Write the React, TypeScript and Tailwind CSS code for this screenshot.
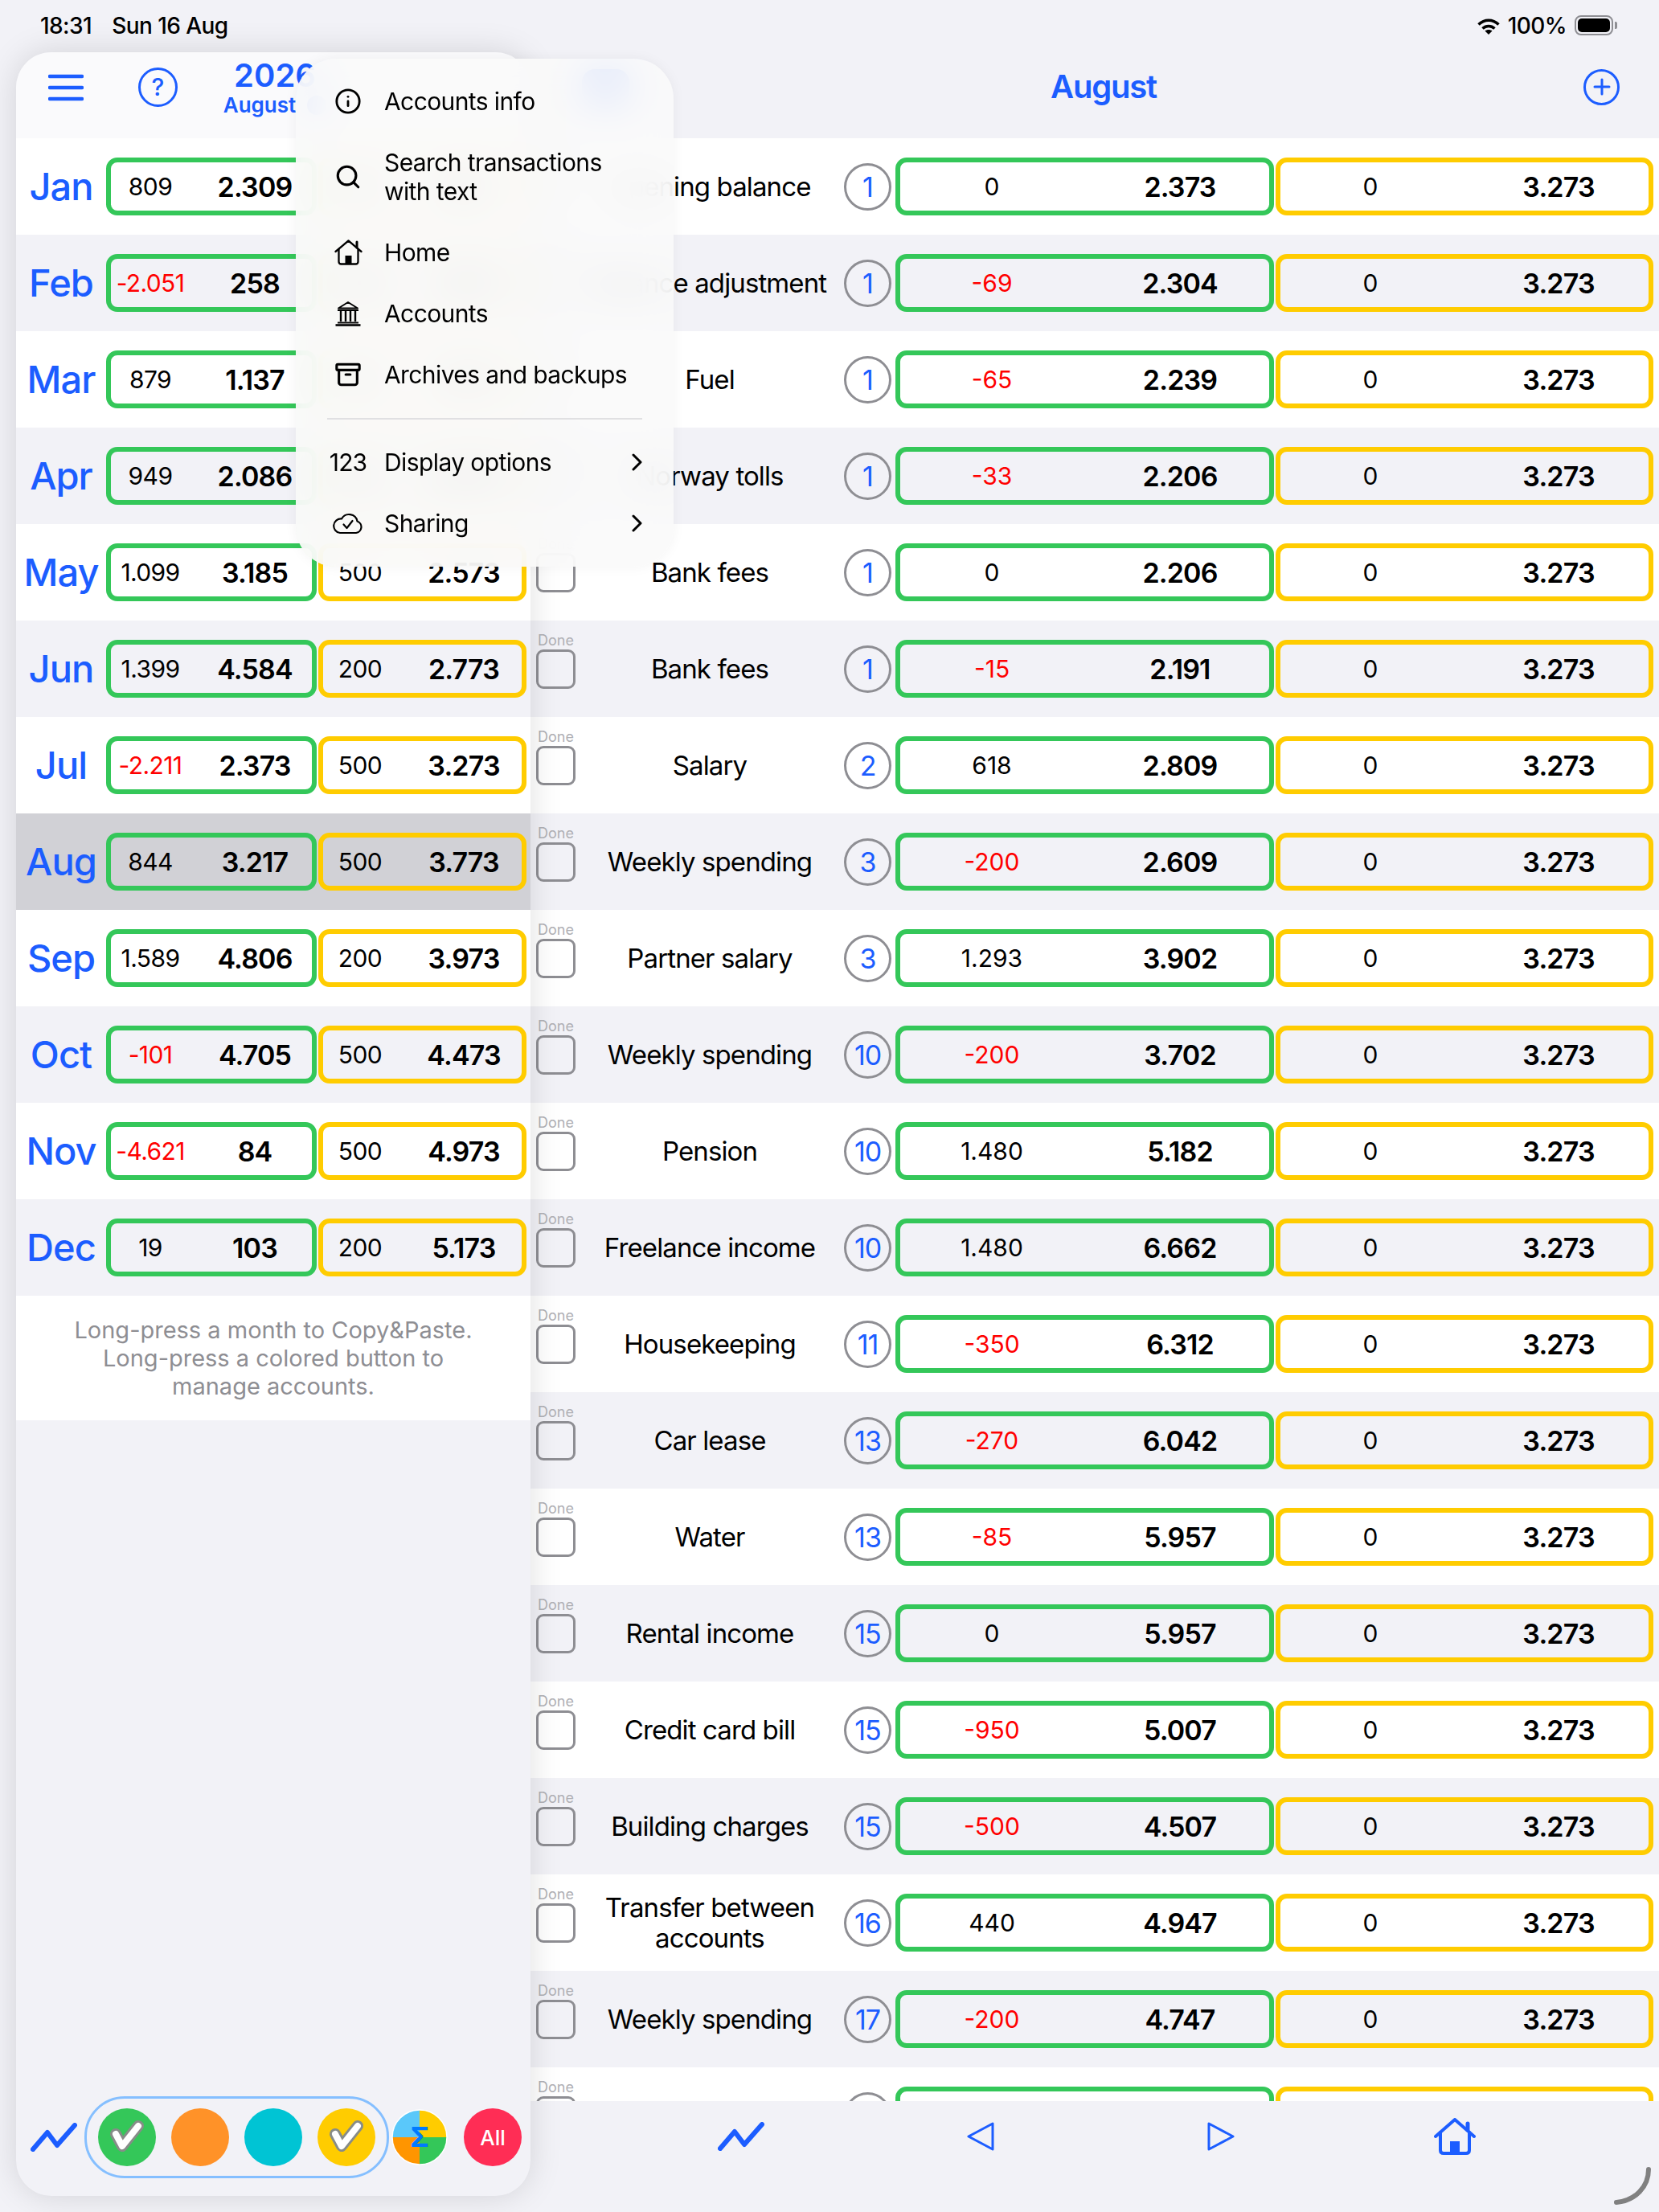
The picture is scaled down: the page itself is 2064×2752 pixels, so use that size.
import { Archive, Info, Search } from "lucide-react";

const blue = "#1c5dff";

const months = [
  { m: "Jan", a: "809", b: "2.309", c: "300", d: "973" },
  { m: "Feb", a: "-2.051", b: "258", c: "200", d: "1.173" },
  { m: "Mar", a: "879", b: "1.137", c: "400", d: "1.573" },
  { m: "Apr", a: "949", b: "2.086", c: "500", d: "2.073" },
  { m: "May", a: "1.099", b: "3.185", c: "500", d: "2.573" },
  { m: "Jun", a: "1.399", b: "4.584", c: "200", d: "2.773" },
  { m: "Jul", a: "-2.211", b: "2.373", c: "500", d: "3.273" },
  { m: "Aug", a: "844", b: "3.217", c: "500", d: "3.773" },
  { m: "Sep", a: "1.589", b: "4.806", c: "200", d: "3.973" },
  { m: "Oct", a: "-101", b: "4.705", c: "500", d: "4.473" },
  { m: "Nov", a: "-4.621", b: "84", c: "500", d: "4.973" },
  { m: "Dec", a: "19", b: "103", c: "200", d: "5.173" },
];

const rows = [
  { name: "Opening balance", day: "1", a: "0", b: "2.373" },
  { name: "Balance adjustment", day: "1", a: "-69", b: "2.304" },
  { name: "Fuel", day: "1", a: "-65", b: "2.239" },
  { name: "Norway tolls", day: "1", a: "-33", b: "2.206" },
  { name: "Bank fees", day: "1", a: "0", b: "2.206" },
  { name: "Bank fees", day: "1", a: "-15", b: "2.191" },
  { name: "Salary", day: "2", a: "618", b: "2.809" },
  { name: "Weekly spending", day: "3", a: "-200", b: "2.609" },
  { name: "Partner salary", day: "3", a: "1.293", b: "3.902" },
  { name: "Weekly spending", day: "10", a: "-200", b: "3.702" },
  { name: "Pension", day: "10", a: "1.480", b: "5.182" },
  { name: "Freelance income", day: "10", a: "1.480", b: "6.662" },
  { name: "Housekeeping", day: "11", a: "-350", b: "6.312" },
  { name: "Car lease", day: "13", a: "-270", b: "6.042" },
  { name: "Water", day: "13", a: "-85", b: "5.957" },
  { name: "Rental income", day: "15", a: "0", b: "5.957" },
  { name: "Credit card bill", day: "15", a: "-950", b: "5.007" },
  { name: "Building charges", day: "15", a: "-500", b: "4.507" },
  { name: "Transfer between accounts", day: "16", a: "440", b: "4.947" },
  { name: "Weekly spending", day: "17", a: "-200", b: "4.747" },
  { name: "", day: "", a: "", b: "" },
];

function Amount({ value }: { value: string }) {
  return <span className={value.startsWith("-") ? "text-[#ff0000]" : "text-black"}>{value}</span>;
}

function ChartIcon() {
  return (
    <svg width="58" height="36" viewBox="0 0 58 36" fill="none" stroke={blue} strokeWidth="6" strokeLinecap="round" strokeLinejoin="round">
      <path d="M3 33 L21 12 L33 28 L55 3" />
    </svg>
  );
}

function CheckMark() {
  return (
    <svg width="72" height="72" viewBox="0 0 72 72" fill="none" strokeLinecap="round" strokeLinejoin="round">
      <path d="M22 32 L30 47 L50 22" stroke="#878c88" strokeWidth="14" />
      <path d="M22 32 L30 47 L50 22" stroke="#ffffff" strokeWidth="8" />
    </svg>
  );
}

function MenuChevron() {
  return (
    <svg className="mr-[39px]" width="14" height="22" viewBox="0 0 14 22" fill="none" stroke="#000" strokeWidth="3" strokeLinecap="round" strokeLinejoin="round">
      <path d="M3 2 L12 11 L3 20" />
    </svg>
  );
}

function MonthRow({ row, index }: { row: (typeof months)[number]; index: number }) {
  const bg = row.m === "Aug" ? "bg-[#d1d1d6]" : index % 2 === 0 ? "bg-white" : "bg-[#f2f2f7]";
  return (
    <div className={`flex h-[120px] items-center ${bg}`}>
      <div className="w-[112px] text-center text-[47px] font-medium tracking-[-0.02em]" style={{ color: blue }}>{row.m}</div>
      <div className="flex h-[72px] w-[262px] items-center rounded-[14px] border-[6px] border-[#34c759]">
        <div className="w-[98px] text-center text-[30px] tracking-[-0.02em]"><Amount value={row.a} /></div>
        <div className="ml-[10px] w-[142px] text-center text-[34px] font-semibold tracking-[-0.025em] text-black">{row.b}</div>
      </div>
      <div className="ml-[2px] flex h-[72px] w-[259px] items-center rounded-[14px] border-[6px] border-[#ffcc00]">
        <div className="w-[92px] text-center text-[30px] tracking-[-0.02em]"><Amount value={row.c} /></div>
        <div className="ml-[11px] w-[144px] text-center text-[34px] font-semibold tracking-[-0.025em] text-black">{row.d}</div>
      </div>
    </div>
  );
}

function TransactionRow({ row, index }: { row: (typeof rows)[number]; index: number }) {
  return (
    <div className={`flex h-[120px] shrink-0 items-center pl-[7px] ${index % 2 === 0 ? "bg-white" : "bg-[#f2f2f7]"}`}>
      <div className="flex w-[49px] flex-col items-center self-start pt-[14px]">
        <div className="h-[22px] text-[18px] leading-[22px] text-[#b0b0b5]">Done</div>
        <div className="h-[49px] w-[49px] rounded-[9px] border-[3px] border-[#8e8e93]" />
      </div>
      <div className="w-[334px] px-[8px] text-center text-[33px] leading-[38px] tracking-[-0.027em] text-black">{row.name}</div>
      <div className="flex h-[59px] w-[59px] items-center justify-center rounded-full border-[3px] border-[#8e8e93] text-[34px] tracking-[-0.03em]" style={{ color: blue }}>{row.day}</div>
      <div className="ml-[5px] flex h-[72px] w-[471px] items-center rounded-[14px] border-[6px] border-[#34c759]">
        <div className="w-[228px] text-center text-[30px]"><Amount value={row.a} /></div>
        <div className="ml-[10px] w-[220px] text-center text-[34px] font-semibold tracking-[-0.025em] text-black">{row.b}</div>
      </div>
      <div className="ml-[2px] flex h-[72px] w-[470px] items-center rounded-[14px] border-[6px] border-[#ffcc00]">
        <div className="w-[224px] text-center text-[30px] text-black">{row.name ? "0" : ""}</div>
        <div className="ml-[12px] w-[220px] text-center text-[34px] font-semibold tracking-[-0.025em] text-black">{row.name ? "3.273" : ""}</div>
      </div>
    </div>
  );
}

function MenuItem({ icon, label, chevron, tall }: { icon: React.ReactNode; label: React.ReactNode; chevron?: boolean; tall?: boolean }) {
  return (
    <div className={`flex items-center pl-[40px] ${tall ? "h-[112px]" : "h-[76px]"}`}>
      <div className="flex w-[50px] justify-center text-black">{icon}</div>
      <div className="ml-[20px] flex-1 text-[30px] leading-[36px] tracking-[-0.02em] text-black">{label}</div>
      {chevron && <MenuChevron />}
    </div>
  );
}

function Menu() {
  return (
    <div className="absolute left-[368px] top-[73px] z-20 h-[632px] w-[470px] rounded-[50px] bg-[#fafafa]/90 pt-[15px] shadow-[0_0_16px_rgba(0,0,0,0.05)] backdrop-blur-xl">
      <MenuItem icon={<Info size={34} strokeWidth={2} />} label="Accounts info" />
      <MenuItem icon={<Search size={34} strokeWidth={2.2} />} label={<>Search transactions<br />with text</>} tall />
      <MenuItem
        icon={
          <svg width="35" height="32" viewBox="0 0 35 32" fill="none" stroke="#000" strokeWidth="2.3" strokeLinejoin="round" strokeLinecap="round">
            <path d="M1.5 15 L17.5 1.5 L33.5 15" />
            <path d="M28 10 V3" strokeWidth="3" />
            <path d="M5.5 12 V27.5 Q5.5 30.5 8.5 30.5 H26.5 Q29.5 30.5 29.5 27.5 V12" />
            <rect x="13.5" y="20" width="8" height="10" fill="#000" stroke="none" />
          </svg>
        }
        label="Home"
      />
      <MenuItem
        icon={
          <svg width="32" height="32" viewBox="0 0 32 32" fill="none" stroke="#000" strokeWidth="2" strokeLinejoin="round">
            <path d="M4 9.5 L16 2 L28 9.5 Z" />
            <path d="M3 12 H29" />
            <path d="M7 13 V26 M13 13 V26 M19 13 V26 M25 13 V26" strokeWidth="2.4" />
            <path d="M3 27.5 H29" />
            <path d="M0.5 30.5 H31.5" strokeWidth="2.6" />
          </svg>
        }
        label="Accounts"
      />
      <MenuItem icon={<Archive size={34} strokeWidth={2.2} />} label="Archives and backups" />
      <div className="ml-[39px] mr-[39px] mb-[15px] mt-[16px] h-[2px] bg-[#e0e0e2]" />
      <MenuItem icon={<span className="text-[30px] tracking-[-0.03em]">123</span>} label="Display options" chevron />
      <MenuItem
        icon={
          <svg width="38" height="28" viewBox="0 0 38 28" fill="none" stroke="#000" strokeWidth="2.2" strokeLinejoin="round" strokeLinecap="round">
            <path d="M9 26 H29 A7.5 7.5 0 0 0 30.5 11.5 A10.5 10.5 0 0 0 11 8.5 A8.8 8.8 0 0 0 9 26 Z" />
            <path d="M13.5 15.5 L17.5 20 L24.5 11" />
          </svg>
        }
        label="Sharing"
        chevron
      />
    </div>
  );
}

function LeftPanel() {
  return (
    <div className="relative z-10 ml-[20px] flex h-[2667px] w-[640px] flex-col overflow-hidden rounded-[44px] bg-[#f2f2f7] shadow-[0_0_40px_rgba(0,0,0,0.13)]">
      <div className="flex h-[107px] items-center bg-[#fafafc] pb-[20px] pl-[40px]">
        <svg width="44" height="34" viewBox="0 0 44 34" fill="none" stroke={blue} strokeWidth="4.5" strokeLinecap="round">
          <path d="M2 3 H42 M2 17 H42 M2 31 H42" />
        </svg>
        <div className="ml-[68px] flex h-[49px] w-[49px] items-center justify-center rounded-full border-[3px] text-[30px] font-medium" style={{ borderColor: blue, color: blue }}>?</div>
        <div className="ml-[58px] flex w-[126px] flex-col items-center" style={{ color: blue }}>
          <div className="text-[40px] font-semibold leading-[44px]">2026</div>
          <div className="flex items-center text-[26px] font-semibold leading-[30px]">
            August
            <div className="ml-[14px] h-[24px] w-[24px] rounded-full" style={{ backgroundColor: blue }} />
          </div>
        </div>
      </div>
      {months.map((row, i) => (
        <MonthRow key={row.m} row={row} index={i} />
      ))}
      <div className="bg-white px-[40px] pb-[25px] pt-[25px] text-center text-[29px] leading-[35px] text-[#8e8e93]">
        Long-press a month to Copy&amp;Paste.<br />Long-press a colored button to<br />manage accounts.
      </div>
      <div className="mb-[22px] mt-auto flex items-center pl-[18px]">
        <ChartIcon />
        <div className="ml-[9px] flex h-[102px] w-[379px] items-center gap-[19px] rounded-[50px] border-[3px] border-[#85bfff] pl-[14px]">
          <div className="h-[72px] w-[72px] rounded-full bg-[#34c759]"><CheckMark /></div>
          <div className="h-[72px] w-[72px] rounded-full bg-[#ff9228]" />
          <div className="h-[72px] w-[72px] rounded-full bg-[#00c4d4]" />
          <div className="h-[72px] w-[72px] rounded-full bg-[#ffcc00]"><CheckMark /></div>
        </div>
        <svg className="ml-[3px]" width="70" height="70" viewBox="0 0 70 70">
          <clipPath id="pie"><circle cx="35" cy="35" r="34" /></clipPath>
          <g clipPath="url(#pie)">
            <rect x="0" y="0" width="35" height="35" fill="#5ac8fa" />
            <rect x="35" y="0" width="35" height="35" fill="#ffcc00" />
            <rect x="0" y="35" width="35" height="35" fill="#ff9500" />
            <rect x="35" y="35" width="35" height="35" fill="#34c759" />
          </g>
          <circle cx="35" cy="35" r="34" fill="none" stroke="#fff" strokeWidth="1.5" />
          <text x="35" y="47" textAnchor="middle" fontSize="34" fontWeight="700" fill="#007aff" fontFamily="Inter">Σ</text>
        </svg>
        <div className="ml-[20px] flex h-[72px] w-[72px] items-center justify-center rounded-full bg-[#ff2d55] text-[26px] font-medium text-white">All</div>
      </div>
    </div>
  );
}

function RightPane() {
  return (
    <div className="flex h-[2687px] flex-1 flex-col">
      <div className="flex h-[107px] shrink-0 items-center pb-[21px] pl-[64px] pr-[49px]">
        <div className="h-[44px] w-[59px] rounded-[16px]" style={{ backgroundColor: blue }} />
        <div className="ml-[524px] text-[40px] font-semibold tracking-[-0.03em]" style={{ color: blue }}>August</div>
        <div className="ml-auto flex h-[45px] w-[45px] items-center justify-center rounded-full border-[3px]" style={{ borderColor: blue, color: blue }}>
          <svg width="24" height="24" viewBox="0 0 24 24" fill="none" stroke={blue} strokeWidth="3" strokeLinecap="round"><path d="M12 3 V21 M3 12 H21" /></svg>
        </div>
      </div>
      <div className="flex min-h-0 flex-1 flex-col overflow-hidden">
        {rows.map((row, i) => (
          <TransactionRow key={i} row={row} index={i} />
        ))}
      </div>
      <div className="relative flex h-[138px] shrink-0 bg-[#f2f2f7] pl-[233px]">
        <div className="flex h-[88px] items-center">
          <ChartIcon />
          <svg className="ml-[252px]" width="34" height="36" viewBox="0 0 34 36" fill="none" stroke={blue} strokeWidth="3" strokeLinejoin="round"><path d="M32 2 V34 L2 18 Z" /></svg>
          <svg className="ml-[265px]" width="34" height="36" viewBox="0 0 34 36" fill="none" stroke={blue} strokeWidth="3" strokeLinejoin="round"><path d="M2 2 V34 L32 18 Z" /></svg>
          <svg className="ml-[248px]" width="52" height="46" viewBox="0 0 52 46" fill="none" stroke={blue} strokeWidth="4" strokeLinejoin="round" strokeLinecap="round">
            <path d="M2 23 L26 2 L50 23" />
            <path d="M42 15 V7" strokeWidth="5" />
            <path d="M8 18 V40 Q8 44 12 44 H40 Q44 44 44 40 V18" />
            <rect x="20" y="29" width="12" height="15" fill={blue} stroke="none" />
          </svg>
        </div>
        <svg className="absolute bottom-[8px] right-[9px]" width="48" height="48" viewBox="0 0 48 48" fill="none" stroke="#808080" strokeWidth="6" strokeLinecap="round">
          <path d="M44 3 C44 24 28 42 4 44" />
        </svg>
      </div>
    </div>
  );
}

export default function App() {
  return (
    <div className="relative flex h-[2752px] w-[2064px] flex-col overflow-hidden bg-[#f2f2f7] font-[family-name:Inter,sans-serif]">
      <div className="flex h-[65px] shrink-0 items-start pl-[50px] pr-[52px] pt-[15px] text-[28px] font-medium leading-[34px] tracking-[-0.02em] text-black">
        <span>18:31</span>
        <span className="ml-[25px]">Sun 16 Aug</span>
        <svg className="ml-auto mt-[8px]" width="28" height="20" viewBox="0 0 28 20" fill="none" stroke="#000" strokeWidth="3.6">
          <path d="M1.5 7.5 C9 0.5 19 0.5 26.5 7.5" />
          <path d="M6.5 12.5 C11 8.5 17 8.5 21.5 12.5" />
          <path d="M14 20 L9.5 15.5 C12 13.5 16 13.5 18.5 15.5 Z" fill="#000" stroke="none" />
        </svg>
        <span className="ml-[10px]">100%</span>
        <div className="ml-[10px] mt-[4px] flex items-center">
          <div className="h-[25px] w-[48px] rounded-[8px] border-[2px] border-[#8e8e93] p-[2px]">
            <div className="h-full w-full rounded-[5px] bg-black" />
          </div>
          <div className="ml-[2px] h-[9px] w-[3px] rounded-r-[2px] bg-[#8e8e93]" />
        </div>
      </div>
      <div className="flex min-h-0 flex-1 items-start">
        <LeftPanel />
        <RightPane />
      </div>
      <Menu />
    </div>
  );
}
